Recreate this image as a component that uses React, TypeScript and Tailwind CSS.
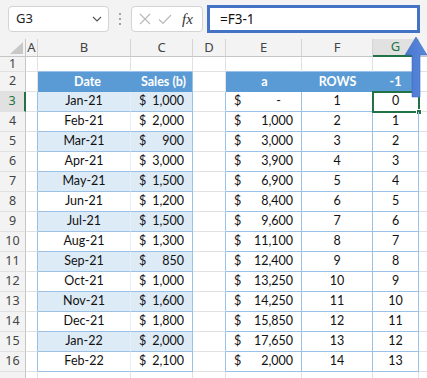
import React from 'react';

const COLS = ['A', 'B', 'C', 'D', 'E', 'F', 'G'];
const WIDTHS = ['w-[12px]', 'w-[93px]', 'w-[62px]', 'w-[33px]', 'w-[76px]', 'w-[71px]', 'w-[46px]'];

const DATES = ['Jan-21', 'Feb-21', 'Mar-21', 'Apr-21', 'May-21', 'Jun-21', 'Jul-21', 'Aug-21', 'Sep-21', 'Oct-21', 'Nov-21', 'Dec-21', 'Jan-22', 'Feb-22'];
const SALES = ['1,000', '2,000', '900', '3,000', '1,500', '1,200', '1,500', '1,300', '850', '1,000', '1,600', '1,800', '2,000', '2,100'];
const RUNNING = ['-', '1,000', '3,000', '3,900', '6,900', '8,400', '9,600', '11,100', '12,400', '13,250', '14,250', '15,850', '17,650', '2,000'];

const grid = 'border-r border-b border-[#e1e1e1]';

function Money({ value, dash }: { value: string; dash?: boolean }) {
  return (
    <div className="flex h-full items-center justify-between pl-[8px] pr-[8px]">
      <span>$</span>
      <span className={dash ? 'pr-[12px]' : ''}>{value}</span>
    </div>
  );
}

function RowHeader({ n, active }: { n?: number; active?: boolean }) {
  return (
    <div
      className={`flex w-[26px] shrink-0 items-center justify-center border-b border-[#e1e1e1] font-['Noto_Sans',sans-serif] text-[12.5px] ${
        active ? 'border-r-2 border-r-[#217346] bg-[#e1e1e1] text-[#217346]' : 'border-r border-r-[#c6c6c6] bg-[#f3f3f3] text-[#444]'
      }`}
    >
      {n}
    </div>
  );
}

function Toolbar() {
  return (
    <div className="flex h-[39px] items-start bg-[#f3f3f3] pt-[6px]">
      <div className="ml-[8px] flex h-[26px] w-[101px] items-center justify-between rounded-[4px] border border-[#d4d4d4] bg-white pl-[7px] pr-[6px] font-['Noto_Sans',sans-serif] text-[13px] text-[#222]">
        <span>G3</span>
        <svg width="10" height="6" viewBox="0 0 10 6" fill="none" stroke="#555" strokeWidth="1.2">
          <path d="M1 1l4 4 4-4" />
        </svg>
      </div>
      <div className="ml-[8px] mt-[7px] flex w-[6px] flex-col items-center gap-[3px]">
        <span className="h-[2px] w-[2px] rounded-full bg-[#8a8a8a]" />
        <span className="h-[2px] w-[2px] rounded-full bg-[#8a8a8a]" />
        <span className="h-[2px] w-[2px] rounded-full bg-[#8a8a8a]" />
      </div>
      <div className="ml-[8px] flex h-[26px] w-[72px] items-center rounded-[4px] border border-[#d4d4d4] bg-white pl-[7px]">
        <svg width="12" height="12" viewBox="0 0 12 12" stroke="#b8b8b8" strokeWidth="1.1">
          <path d="M1 1l10 10M11 1L1 11" />
        </svg>
        <svg className="ml-[7px]" width="14" height="11" viewBox="0 0 14 11" fill="none" stroke="#b8b8b8" strokeWidth="1.1">
          <path d="M1 5.5l4 4L13 1" />
        </svg>
        <span className="ml-[10px] font-['Liberation_Serif',serif] text-[15px] italic leading-none text-[#333]">fx</span>
      </div>
      <div className="ml-[4px] mt-[-1px] flex h-[28px] w-[213px] items-center border-[3px] border-[#4472c4] bg-white pl-[10px] font-['Noto_Sans',sans-serif] text-[13.5px] text-[#111]">
        =F3-1
      </div>
    </div>
  );
}

function ColumnHeader() {
  return (
    <div className="flex h-[18px] bg-[#f3f3f3] font-['Noto_Sans',sans-serif] text-[13px] text-[#444]">
      <div className="relative w-[26px] shrink-0 border-r border-b border-[#c6c6c6]">
        <svg className="absolute right-[2px] bottom-[2px]" width="13" height="12" viewBox="0 0 13 12">
          <path d="M13 0V12H0Z" fill="#c8c8c8" />
        </svg>
      </div>
      {COLS.map((c, i) => (
        <div
          key={c}
          className={`flex shrink-0 items-center justify-center border-r border-[#d4d4d4] ${WIDTHS[i]} ${
            c === 'G' ? 'border-b-2 border-b-[#217346] bg-[#e1e1e1] text-[#217346]' : 'border-b border-b-[#c6c6c6]'
          }`}
        >
          {c}
        </div>
      ))}
      <div className="flex-1 border-b border-[#c6c6c6]" />
    </div>
  );
}

function Row({ n, label = true, children, height = 'h-[20px]' }: { n: number; label?: boolean; children?: React.ReactNode; height?: string }) {
  return (
    <div className={`flex ${height}`}>
      <RowHeader n={label ? n : undefined} active={n === 3} />
      {children}
      <div className="flex-1 border-b border-[#e1e1e1]" />
    </div>
  );
}

export default function App() {
  return (
    <div className="relative h-[378px] w-[427px] overflow-hidden bg-white font-['Lato','Liberation_Sans',sans-serif] text-[12.5px] text-[#111]">
      <Toolbar />
      <ColumnHeader />

      <Row n={1} height="h-[15px]">
        <div className={`w-[12px] ${grid}`} />
        <div className="w-[93px] border-r border-b border-r-[#e1e1e1] border-b-[#9bc2e6]" />
        <div className="w-[62px] border-r border-b border-r-[#e1e1e1] border-b-[#9bc2e6]" />
        <div className={`w-[33px] ${grid}`} />
        <div className="w-[76px] border-r border-b border-r-[#e1e1e1] border-b-[#9bc2e6]" />
        <div className="w-[71px] border-r border-b border-r-[#e1e1e1] border-b-[#9bc2e6]" />
        <div className="w-[46px] border-r border-b border-r-[#e1e1e1] border-b-[#9bc2e6]" />
      </Row>

      <Row n={2}>
        <div className={`w-[12px] ${grid}`} />
        <div className="flex w-[93px] items-center justify-center bg-[#5b9bd5] pl-[6px] font-bold text-white">Date</div>
        <div className="flex w-[62px] items-center justify-end border-r border-[#9bc2e6] bg-[#5b9bd5] pr-[6px] font-bold text-white">
          Sales (b)
        </div>
        <div className={`w-[33px] ${grid}`} />
        <div className="flex w-[76px] items-center justify-center border-l border-[#5b9bd5] bg-[#5b9bd5] font-bold text-white">a</div>
        <div className="flex w-[71px] items-center justify-center bg-[#5b9bd5] font-bold text-white">ROWS</div>
        <div className="flex w-[46px] items-center justify-center border-r border-[#9bc2e6] bg-[#5b9bd5] font-bold text-white">-1</div>
      </Row>

      {DATES.map((d, i) => {
        const n = i + 3;
        const band = i % 2 === 0 ? 'bg-[#ddebf7]' : 'bg-white';
        return (
          <Row key={d + n} n={n}>
            <div className="w-[12px] border-r border-b border-[#e1e1e1] border-r-[#9bc2e6]" />
            <div className={`flex w-[93px] items-center justify-center border-r border-b border-r-[#e6eef6] border-b-[#9bc2e6] ${band}`}>
              {d}
            </div>
            <div className={`w-[62px] border-r border-b border-[#9bc2e6] ${band}`}>
              <Money value={SALES[i]} />
            </div>
            <div className="w-[33px] border-r border-b border-b-[#e1e1e1] border-r-[#9bc2e6]" />
            <div className="w-[76px] border-r border-b border-[#9bc2e6]">
              <Money value={RUNNING[i]} dash={RUNNING[i] === '-'} />
            </div>
            <div className="flex w-[71px] items-center justify-center border-r border-b border-[#9bc2e6]">{i + 1}</div>
            <div
              className={`relative flex w-[46px] items-center justify-center border-r border-b border-[#9bc2e6] ${
                n === 3 ? 'outline-2 -outline-offset-1 outline-[#217346]' : ''
              }`}
            >
              {i}
              {n === 3 && <span className="absolute right-[-4px] bottom-[-4px] h-[6px] w-[6px] border border-white bg-[#217346]" />}
            </div>
          </Row>
        );
      })}

      <Row n={17} label={false}>
        <div className={`w-[12px] ${grid}`} />
        <div className={`w-[93px] ${grid}`} />
        <div className={`w-[62px] ${grid}`} />
        <div className={`w-[33px] ${grid}`} />
        <div className={`w-[76px] ${grid}`} />
        <div className={`w-[71px] ${grid}`} />
        <div className={`w-[46px] ${grid}`} />
      </Row>

      <svg className="absolute left-[403px] top-[35px]" width="24" height="63" viewBox="0 0 24 63">
        <defs>
          <linearGradient id="arrowFill" x1="0" x2="1" y1="0" y2="0">
            <stop offset="0" stopColor="#4a78d0" />
            <stop offset="1" stopColor="#5a88dc" />
          </linearGradient>
        </defs>
        <path d="M13 2L2 20H9V62H17V20H24Z" fill="url(#arrowFill)" stroke="#3f6cbf" strokeWidth="0.6" />
      </svg>
    </div>
  );
}
